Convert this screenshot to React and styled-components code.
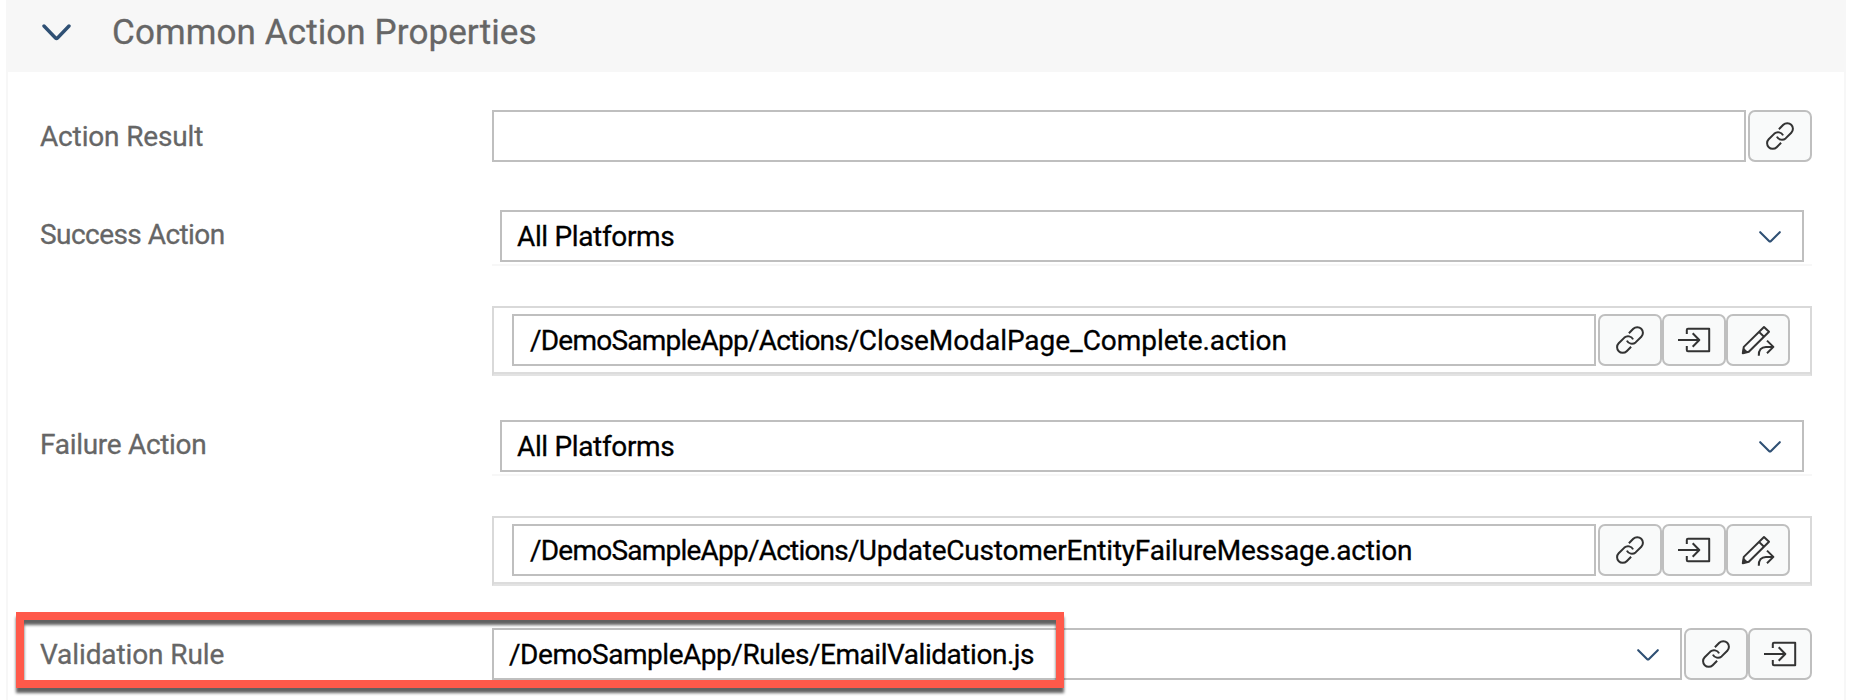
import React from "react";
import styled, { createGlobalStyle } from "styled-components";

const GlobalStyle = createGlobalStyle`
  *, *::before, *::after { box-sizing: border-box; }
  html, body { margin: 0; background: #fff; }
  body {
    height: 700px;
    overflow: hidden;
    font-family: Roboto, "Liberation Sans", sans-serif;
    font-size: 28px;
    color: #000;
    -webkit-text-stroke: 0.3px currentColor;
  }
`;

const Panel = styled.section`
  width: 1840px;
  min-height: 700px;
  margin-left: 6px;
  border: solid #f7f7f7;
  border-width: 0 2px;
`;

const Header = styled.header`
  display: flex;
  align-items: center;
  height: 72px;
  padding: 0 0 7px 34px;
  background: #f7f7f7;
`;

const Title = styled.h2`
  margin: 0 0 0 41px;
  font-size: 35px;
  font-weight: 400;
  line-height: 42px;
  letter-spacing: ${(p) => p.$spacing}px;
  color: #666;
  white-space: nowrap;
`;

const Body = styled.div`
  padding: 38px 32px 0;
`;

const Row = styled.div`
  position: relative;
  display: grid;
  grid-template-columns: 452px 1320px;
  margin-top: ${(p) => p.$gap || 0}px;
`;

const Label = styled.label`
  grid-column: 1;
  height: 52px;
  line-height: 54px;
  margin-top: ${(p) => p.$shift || 0}px;
  letter-spacing: ${(p) => p.$spacing || 0}px;
  color: #666;
  white-space: nowrap;
`;

const Field = styled.div`
  grid-column: 2;
  display: flex;
`;

const SelectField = styled(Field)`
  padding: 0 8px 2px;
  border-bottom: 2px solid #f7f7f7;
`;

const GroupField = styled(Field)`
  height: 70px;
  padding: 6px 20px 0 18px;
  border: 2px solid #d9d9d9;
  border-bottom-color: #e3e3e3;
  box-shadow: inset 0 -2px #dcdcdc;
`;

const InputBox = styled.div`
  flex: 1;
  display: flex;
  align-items: center;
  justify-content: space-between;
  height: 52px;
  padding: 2px 21px 0 ${(p) => p.$indent || 15}px;
  border: 2px solid #bfbfbf;
  background: #fff;
`;

const Value = styled.span`
  line-height: 46px;
  letter-spacing: ${(p) => p.$spacing || 0}px;
  white-space: nowrap;
`;

const Folder = styled.span`
  letter-spacing: -0.78px;
`;

const Buttons = styled.div`
  display: flex;
  margin-left: 2px;
`;

const IconButton = styled.button`
  width: 64px;
  height: 52px;
  padding: 0;
  border: 2px solid #bfbfbf;
  border-radius: 7px;
  background: #f9fafa;
`;

const Glyph = styled.svg`
  display: block;
  fill: none;
  stroke: #333;
  stroke-width: 2;
  stroke-linecap: butt;
  stroke-linejoin: round;
`;

const Chevron = styled.svg`
  display: block;
  flex: none;
  fill: none;
  stroke: #2f5074;
  stroke-linecap: round;
  stroke-linejoin: round;
`;

const Highlight = styled.div`
  position: absolute;
  left: -24px;
  top: -16px;
  width: 1048px;
  height: 76px;
  border: 8px solid #ff594a;
  filter: drop-shadow(0 5px 1.5px rgba(0, 0, 0, 0.62));
  pointer-events: none;
`;

const icons = {
  link: (
    <>
      <path d="M30.9 19.3 L35.3 14.8 A5.6 5.6 0 0 1 43.3 22.7 L37.6 28.4 A5.6 5.6 0 0 1 28.9 26.6" />
      <path d="M33.1 32.7 L28.7 37.2 A5.6 5.6 0 0 1 20.7 29.3 L26.4 23.6 A5.6 5.6 0 0 1 35.1 25.4" />
    </>
  ),
  enter: (
    <>
      <path d="M24.8 20 V16 Q24.8 14.8 26 14.8 H47.2 V37.2 H26 Q24.8 37.2 24.8 36 V32" />
      <path d="M16 26 H37.2 M30.7 19.3 L37.3 26 L30.7 32.7" />
    </>
  ),
  edit: (
    <>
      <path d="M16.8 39.2 L17.8 32.9 L38 13 L43 17.8 L22.8 37.8 Z M33 17.9 L38 22.8" />
      <path d="M16.2 39.8 L17.2 33.6 L22.4 38.2 Z" fill="#333" stroke="none" />
      <path d="M32.8 41.8 C32.4 36 35.5 32.9 40 32.9 H47.2 M41 26.6 L47.4 32.9 L41 39.2" />
    </>
  ),
};

function ActionButton({ icon, label }) {
  return (
    <IconButton type="button" aria-label={label}>
      <Glyph width="60" height="48" viewBox="2 2 60 48">
        {icons[icon]}
      </Glyph>
    </IconButton>
  );
}

function SelectArrow() {
  return (
    <Chevron width="22" height="12" viewBox="0 0 22 12" strokeWidth="2.1">
      <path d="M1.2 1.2 L10 10 Q11 11 12 10 L20.8 1.2" />
    </Chevron>
  );
}

function ActionRows({ label, labelSpacing, gap, file, fileSpacing }) {
  return (
    <>
      <Row $gap={gap}>
        <Label $shift={-2} $spacing={labelSpacing}>{label}</Label>
        <SelectField>
          <InputBox>
            <Value $spacing={-0.35}>All Platforms</Value>
            <SelectArrow />
          </InputBox>
        </SelectField>
      </Row>
      <Row $gap={40}>
        <GroupField>
          <InputBox $indent={16}>
            <Value $spacing={fileSpacing}>
              <Folder>/DemoSampleApp/Actions/</Folder>
              {file}
            </Value>
          </InputBox>
          <Buttons>
            <ActionButton icon="link" label="Link" />
            <ActionButton icon="enter" label="Open" />
            <ActionButton icon="edit" label="Edit" />
          </Buttons>
        </GroupField>
      </Row>
    </>
  );
}

export default function App() {
  return (
    <>
      <GlobalStyle />
      <Panel>
        <Header>
          <Chevron width="29" height="17" viewBox="0 0 29 17" strokeWidth="3.4">
            <path d="M2 2 L13.5 14 Q14.5 15 15.5 14 L27 2" />
          </Chevron>
          <Title $spacing={0.1}>Common Action Properties</Title>
        </Header>
        <Body>
          <Row>
            <Label $spacing={-0.15}>Action Result</Label>
            <Field>
              <InputBox />
              <Buttons>
                <ActionButton icon="link" label="Link" />
              </Buttons>
            </Field>
          </Row>
          <ActionRows
            label="Success Action"
            labelSpacing={-0.55}
            gap={48}
            file="CloseModalPage_Complete.action"
            fileSpacing={-0.04}
          />
          <ActionRows
            label="Failure Action"
            labelSpacing={-0.3}
            gap={44}
            file="UpdateCustomerEntityFailureMessage.action"
            fileSpacing={-0.22}
          />
          <Row $gap={42}>
            <Label $spacing={-0.1}>Validation Rule</Label>
            <Field>
              <InputBox>
                <Value $spacing={-0.46}>/DemoSampleApp/Rules/EmailValidation.js</Value>
                <SelectArrow />
              </InputBox>
              <Buttons>
                <ActionButton icon="link" label="Link" />
                <ActionButton icon="enter" label="Open" />
              </Buttons>
            </Field>
            <Highlight />
          </Row>
        </Body>
      </Panel>
    </>
  );
}
